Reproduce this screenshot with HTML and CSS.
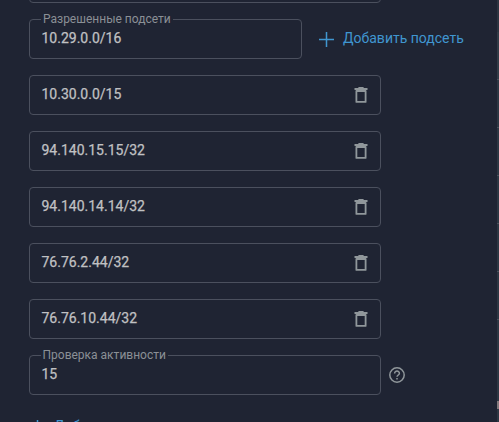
FILE: index.html
```html
<!DOCTYPE html>
<html lang="ru">
<head>
<meta charset="utf-8">
<title>Разрешенные подсети</title>
<link rel="stylesheet" href="styles.css">
</head>
<body>
<svg class="defs" aria-hidden="true">
  <symbol id="trash" viewBox="0 0 14 18">
    <path d="M0.5 2h3.5l.8-1h4.4l.8 1h3.5v2H0.5z" fill="currentColor"/>
    <path d="M2.4 5v10.9h9.2V5z" fill="none" stroke="currentColor" stroke-width="1.8" stroke-linejoin="round"/>
  </symbol>
  <symbol id="plus" viewBox="0 0 15 15">
    <path d="M7.5 0v15M0 7.5h15" stroke="currentColor" stroke-width="1.5"/>
  </symbol>
</svg>
<main class="page">
  <form class="form">
    <div class="row"><div class="field"></div></div>
    <div class="row">
      <div class="field field--short"><span class="label">Разрешенные подсети</span><span class="value">10.29.0.0/16</span></div>
      <a class="add"><svg class="plus"><use href="#plus"/></svg><span>Добавить подсеть</span></a>
    </div>
    <div class="row"><div class="field"><span class="value">10.30.0.0/15</span><svg class="trash"><use href="#trash"/></svg></div></div>
    <div class="row"><div class="field"><span class="value">94.140.15.15/32</span><svg class="trash"><use href="#trash"/></svg></div></div>
    <div class="row"><div class="field"><span class="value">94.140.14.14/32</span><svg class="trash"><use href="#trash"/></svg></div></div>
    <div class="row"><div class="field"><span class="value">76.76.2.44/32</span><svg class="trash"><use href="#trash"/></svg></div></div>
    <div class="row"><div class="field"><span class="value">76.76.10.44/32</span><svg class="trash"><use href="#trash"/></svg></div></div>
    <div class="row">
      <div class="field"><span class="label label--check">Проверка активности</span><span class="value">15</span></div>
      <svg class="help" viewBox="0 0 16 16"><circle cx="8" cy="8" r="7.2"/><path d="M5.6 6.4a2.4 2.4 0 1 1 4.8 0c0 1.5-2.4 1.7-2.4 3.4M8 11.1v1.5"/></svg>
    </div>
    <div class="row row--last"><a class="add"><svg class="plus"><use href="#plus"/></svg><span>Добавить</span></a></div>
  </form>
  <aside class="edge"><i class="thumb"></i></aside>
</main>
</body>
</html>
```

FILE: styles.css
```css
* { box-sizing: border-box; }

body {
  margin: 0;
  height: 422px;
  overflow: hidden;
  background: #1f2433;
  font: 14px/20px Roboto, sans-serif;
}

.defs { position: absolute; width: 0; height: 0; }

.page { display: flex; height: 422px; overflow: hidden; }

.form {
  display: flex;
  flex-direction: column;
  gap: 16px;
  flex: 1;
  margin-top: -37px;
  padding-left: 29px;
}

.row { display: flex; align-items: center; height: 40px; flex: none; }

.field {
  position: relative;
  display: flex;
  align-items: center;
  justify-content: space-between;
  width: 352px;
  height: 40px;
  padding: 0 12px 2px 11.5px;
  border: 1px solid #4b505e;
  border-radius: 4px;
}

.field--short { width: 273px; }

.label {
  position: absolute;
  top: -9px;
  left: 11px;
  padding: 0 2px;
  background: #1f2433;
  color: #8b9096;
  font-size: 12px;
  line-height: 16px;
  white-space: nowrap;
}

.label--check { padding-left: 1.5px; }

.value { color: #c0c1c3; -webkit-text-stroke: 0.25px #c0c1c3; }

.trash { width: 14px; height: 18px; margin-top: 2px; color: #90979b; }

.add {
  display: flex;
  align-items: center;
  gap: 9px;
  margin-left: 17px;
  color: #4096d0;
  white-space: nowrap;
}

.add span { position: relative; top: -1px; }

.plus { width: 15px; height: 15px; }

.help {
  width: 16px;
  height: 16px;
  margin-left: 8px;
  fill: none;
  stroke: #90979b;
  stroke-width: 1.5;
}

.row--last { height: 32px; }
.row--last .add { margin-left: 1px; }

.edge {
  flex: none;
  width: 2px;
  height: 422px;
  padding-top: 401px;
  background:
    linear-gradient(#4a525d, #4a525d) 0 79px / 2px 1px no-repeat,
    linear-gradient(#4a525d, #4a525d) 0 127px / 2px 1px no-repeat,
    linear-gradient(#4a525d, #4a525d) 0 175px / 2px 1px no-repeat,
    linear-gradient(#4a525d, #4a525d) 0 223px / 2px 1px no-repeat,
    linear-gradient(#4a525d, #4a525d) 0 271px / 2px 1px no-repeat,
    linear-gradient(#4a525d, #4a525d) 0 319px / 2px 1px no-repeat,
    linear-gradient(#2d3541 32px, #323c47 32px, #323c47 79px, #2d3743 79px);
}

.thumb { display: block; height: 8px; background: #81797c; }
```
